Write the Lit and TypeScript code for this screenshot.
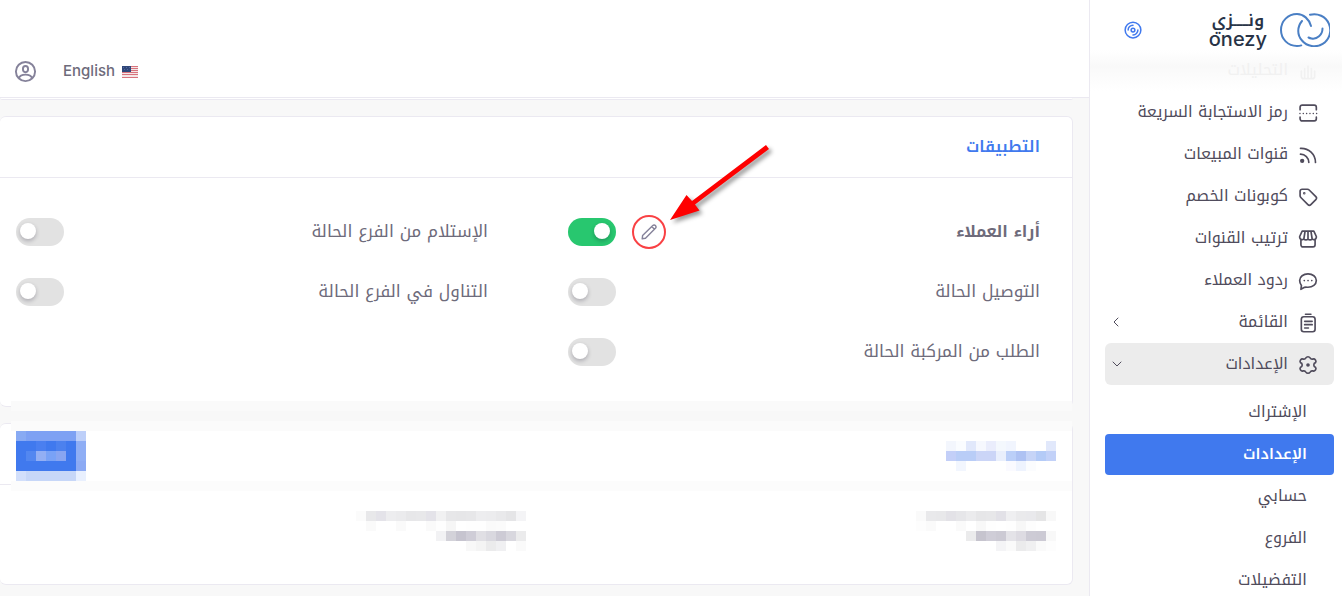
import { LitElement, html, css, svg, nothing } from "lit";
import { customElement, property } from "lit/decorators.js";

const CELL = 10;

const tidy = (rows: string[]) => rows.map((r) => r.trim().split(/\s+/));

const titleTiles = tidy([
  "f3f6fd fafcff e1e8fb f6f8fe eaedfc f4f8fd f1f5fe - - - e1e8fb",
  "c3cff8 b9cdf7 b9cdf7 cbd5f7 cbd5f7 e9effc bbcff8 aec2f3 c6d4f7 b4cbf7 c2d1f8",
  "- f2f6fe - - - - fafaff eef3fe fbfcfe - -",
]);

const buttonTiles = tidy([
  "88aaf3 7ea1f3 7ea1f3 7ea1f3 7ea1f3 7ea1f3 bdcff9",
  "4079ee 4079ee 4a7ff0 4079ee 4c81ee 4079ee 8faef5",
  "4079ee 5387f0 93aff4 79a2f6 88a5f1 4079ee 8faef5",
  "4079ee 4079ee 4079ee 4079ee 4079ee 4079ee 8caaf4",
  "d2dffb c7d7f8 c7d7f8 c7d7f8 c7d7f8 c7d7f8 e9f0fe",
]);

const firstTextTiles = tidy([
  "fafafa e9e9eb e8e8ea e3e2e7 e6e6e9 ebebed e6e6e8 e7e7e9 e2e1e7 efeff1 eaeaec e9e9ec e5e5e6 f8f8f8",
  "fdfdfd fafafa - - fafafa - f8f8f8 fefefe - fefefe f7f7f7 fdfdfd - -",
  "- - - - - ebebec c6c4ce cfcdd7 cccad4 e4e3e8 dddbe2 cdcbd5 cccad4 f8f8f8",
  "- - - - - - - - f4f4f6 fafafa ebebec f0f0f1 fafafa fdfdfd",
]);

const secondTextTiles = tidy([
  "fbfbfb e8e8ea e4e3e9 ededef ebebed e7e7e9 e8e8ea e4e3e9 f1f1f2 e7e7e9 e6e6e8 e7e7e9 ededef ececee e9e9eb e5e5e7 f4f4f6",
  "- fafafa - - fafafa - - fafafa fefefe f6f6f6 - fefefe fefefe fafafa fbfbfb - -",
  "- - - - - - - - f2f2f4 d3d2d9 c6c4cf cfcdd7 e0dfe4 d9d8df cdcbd5 d8d7de ebebec",
  "- - - - - - - - - - - f8f8f8 f4f4f4 ebebec f0f0f2 - fafafa",
]);

const icons = {
  chart: svg`<path d="M4 11v6a3 3 0 0 0 3 3h10a3 3 0 0 0 3-3v-6M8 8v12M12 5v15M16 8v12"/>`,
  scan: svg`<path d="M2.500 8V5a2.500 2.500 0 0 1 2.500-2.500h14.500a2.500 2.500 0 0 1 2.500 2.500v3M2.500 17v2a2.500 2.500 0 0 0 2.500 2.500h14.500a2.500 2.500 0 0 0 2.500-2.500v-2"/><path d="M2.300 12.500h20.500" stroke-width="1.700" stroke-dasharray=".1 3.900"/>`,
  rss: svg`<circle cx="5" cy="19" r="1.600" fill="currentColor"/><path d="M3 11a10 10 0 0 1 10 10M3 4a17 17 0 0 1 18 17"/>`,
  tag: svg`<path d="M2.500 5v5.500a3 3 0 0 0 .9 2.100l8.500 8.500a2.500 2.500 0 0 0 3.500 0l6-6a2.500 2.500 0 0 0 0-3.500l-8-8a3 3 0 0 0-2.100-.9H5A2.500 2.500 0 0 0 2.500 5z"/><circle cx="7.500" cy="7.500" r=".5" fill="currentColor"/>`,
  store: svg`<path d="M3.500 13v6a2.500 2.500 0 0 0 2.500 2.500h12a2.500 2.500 0 0 0 2.500-2.500v-6M5 2.500h14L22 9v1a3 3 0 0 1-5 2 3.400 3.400 0 0 1-5 0 3.400 3.400 0 0 1-5 0 3 3 0 0 1-5-2V9zM8.500 2.500L7 12M15.500 2.500L17 12M12 2.500V12"/>`,
  chat: svg`<path d="M12 3.500c5.500 0 10 3.300 10 8s-4.500 8-10 8c-1.500 0-3-.2-4.200.1L3.500 22l.6-4.500C3 16 2 14 2 11.500c0-4.700 4.500-8 10-8z"/><path d="M7.500 11.500h.1M12 11.500h.1M16.500 11.500h.1"/>`,
  list: svg`<rect x="4" y="4.500" width="16.500" height="18" rx="3"/><path d="M9 1.500h6.500M8 10h9M8 14h9M8 18h4.500"/>`,
  gear: svg`<path d="M9.500 3.500a2.900 2.900 0 0 1 5 0 2.900 2.900 0 0 0 3.300 1.400 2.900 2.900 0 0 1 3.300 4.300 2.900 2.900 0 0 0 0 5.600 2.900 2.900 0 0 1-3.300 4.300 2.900 2.900 0 0 0-3.300 1.400 2.900 2.900 0 0 1-5 0 2.900 2.900 0 0 0-3.300-1.400 2.900 2.900 0 0 1-3.300-4.300 2.900 2.900 0 0 0 0-5.600 2.900 2.900 0 0 1 3.300-4.300 2.900 2.900 0 0 0 3.300-1.400z"/><circle cx="12" cy="12" r="1.200" fill="currentColor"/>`,
};

type IconName = keyof typeof icons;

interface MenuItem {
  label: string;
  icon: IconName;
  arrow?: "closed" | "open";
}

const menu: MenuItem[] = [
  { label: "رمز الاستجابة السريعة", icon: "scan" },
  { label: "قنوات المبيعات", icon: "rss" },
  { label: "كوبونات الخصم", icon: "tag" },
  { label: "ترتيب القنوات", icon: "store" },
  { label: "ردود العملاء", icon: "chat" },
  { label: "القائمة", icon: "list", arrow: "closed" },
  { label: "الإعدادات", icon: "gear", arrow: "open" },
];

const submenu = ["الإشتراك", "الإعدادات", "حسابي", "الفروع", "التفضيلات"];

const apps = [
  { label: "أراء العملاء", on: true, editable: true },
  { label: "الإستلام من الفرع الحالة", on: false, editable: false },
  { label: "التوصيل الحالة", on: false, editable: false },
  { label: "التناول في الفرع الحالة", on: false, editable: false },
  { label: "الطلب من المركبة الحالة", on: false, editable: false },
];

@customElement("tile-block")
export class TileBlock extends LitElement {
  @property({ attribute: false }) tiles: string[][] = [];

  static styles = css`
    :host { display: block; flex: none; }
    svg { display: block; }
  `;

  render() {
    const w = this.tiles[0].length * CELL;
    const h = this.tiles.length * CELL;
    return html`<svg width=${w} height=${h} shape-rendering="crispEdges" aria-hidden="true">
      ${this.tiles.map((row, y) =>
        row.map((c, x) =>
          c === "-" ? nothing : svg`<rect x=${x * CELL} y=${y * CELL} width=${CELL} height=${CELL} fill="#${c}"/>`
        )
      )}
    </svg>`;
  }
}

@customElement("side-menu")
export class SideMenu extends LitElement {
  static styles = css`
    :host { display: block; background: #fff; border-inline-end: 1px solid #ebe9f1; color: #504c5c; overflow: hidden; }
    a { color: inherit; text-decoration: none; }
    .brand { display: flex; align-items: center; height: 58px; padding: 2px 12px 0; box-sizing: border-box; }
    .logo { display: flex; align-items: center; gap: 13px; color: #283347; }
    .mark { display: block; }
    .words { display: flex; flex-direction: column; align-items: center; }
    .word-ar { font-size: 17px; line-height: 18px; font-weight: 600; }
    .word-en { font: 500 20px/20px Inter, sans-serif; }
    .pin { margin-inline-start: auto; margin-inline-end: 22px; padding: 0; border: 0; background: none; color: #4079ee; display: flex; }
    .nav { padding-inline: 8px 15px; }
    .item { display: flex; align-items: center; gap: 10px; height: 42px; padding-block: 2px 0; padding-inline: 16px 6px; border-radius: 6px; font-size: 16px; box-sizing: border-box; }
    .label { flex: 1; padding-bottom: 4px; }
    .glyph { display: block; flex: none; fill: none; stroke: currentColor; stroke-width: 2; stroke-linecap: round; stroke-linejoin: round; }
    .chevron { stroke-width: 1; }
    .open { background: #ececec; }
    .faded { height: 41px; margin: -8px -8px 0 -15px; padding-inline: 24px 21px; border-radius: 0; color: #f1f1f1; background: linear-gradient(#fff, #f9f9f9 40%, #fff); }
    .sub { padding-top: 7px; }
    .child { display: flex; align-items: center; height: 41px; margin-bottom: 1px; padding: 0 27px 2px; border-radius: 4px; font-size: 16px; box-sizing: border-box; }
    .current { background: #4079ee; color: #fff; font-size: 15px; font-weight: 600; }
  `;

  private icon(name: IconName) {
    return html`<svg class="glyph" width="20" height="20" viewBox="0 0 24 24">${icons[name]}</svg>`;
  }

  render() {
    return html`
      <div class="brand">
        <a class="logo" href="#">
          <svg class="mark" width="50" height="34" viewBox="0 0 50 34" fill="none" stroke="#4a7fc4" stroke-width="2" stroke-linecap="round">
            <path d="M31 13C29 6 23.500 1 17 1 8 1 1 8 1 17s7 16 16 16c1.500 0 3-.2 4.300-.6"/>
            <path d="M22 8c-5 6-5 14 0 19.500A16 16 0 1 0 30 1.800"/>
            <path d="M42.500 15.500c0 6.500-5.500 11-11 10-1.200-.2-2.200-.6-3-1"/>
          </svg>
          <span class="words">
            <span class="word-ar">ونـــــزي</span>
            <span class="word-en">onezy</span>
          </span>
        </a>
        <button class="pin" aria-label="تثبيت القائمة">
          <svg width="18" height="18" viewBox="0 0 24 24" fill="none" stroke="currentColor" stroke-width="2" stroke-linecap="round">
            <circle cx="12" cy="12" r="10.500"/><circle cx="12" cy="12" r="2.500"/>
            <path d="M5.500 12A6.500 6.500 0 0 1 12 5.500M18.500 12a6.500 6.500 0 0 1-6.500 6.500"/>
          </svg>
        </button>
      </div>
      <nav class="nav">
        <a class="item faded" href="#">${this.icon("chart")}<span class="label">التحليلات</span></a>
        ${menu.map(
          (m) => html`<a class="item ${m.arrow === "open" ? "open" : ""}" href="#">
            ${this.icon(m.icon)}<span class="label">${m.label}</span>
            ${m.arrow
              ? html`<svg class="glyph chevron" width="12" height="12" viewBox="0 0 12 12">
                  <path d=${m.arrow === "open" ? "M2 3l4 4 4-4" : "M7 1L3 5l4 4"} />
                </svg>`
              : nothing}
          </a>`
        )}
        <div class="sub">
          ${submenu.map((s, i) => html`<a class="child ${i === 1 ? "current" : ""}" href="#">${s}</a>`)}
        </div>
      </nav>
    `;
  }
}

@customElement("app-root")
export class AppRoot extends LitElement {
  static styles = css`
    :host {
      display: grid; grid-template-columns: 253px minmax(0, 1fr); direction: rtl; height: 100vh; overflow: hidden;
      background: #f8f8f8; color: #6e6b7b; font-family: "Noto Kufi Arabic", "Noto Sans Arabic", "DejaVu Sans", sans-serif; font-size: 16px;
    }
    main { display: flex; flex-direction: column; overflow: hidden; }
    .top { display: flex; flex: none; flex-direction: row-reverse; align-items: flex-end; gap: 26px; height: 98px; padding: 0 14px 14px; box-sizing: border-box; background: #fff; border-bottom: 1px solid #ebe9f1; }
    .user { display: flex; padding: 0; border: 0; background: none; color: #85829a; }
    .lang { display: flex; align-items: center; gap: 7px; height: 24px; color: #6e6b7b; text-decoration: none; direction: ltr; font: 500 15px/24px Inter, sans-serif; }
    .flag { display: block; padding-top: 2px; }
    .previous { flex: none; height: 2px; margin-inline-start: 16px; box-sizing: border-box; background: #fff; border-bottom: 1px solid #ebe9f1; border-radius: 0 0 6px 6px; }
    .card { position: relative; flex: none; margin: 16px 16px 0 0; background: #fff; border: 1px solid #ebe9f1; border-left: 0; border-radius: 6px; }
    .card-head { display: flex; align-items: center; height: 61px; padding: 0 32px 2px; box-sizing: border-box; border-bottom: 1px solid #ebe9f1; }
    .title { margin: 0; color: #4079ee; font-size: 16px; font-weight: 600; }
    .apps { display: grid; grid-template-columns: 1fr 1fr; column-gap: 80px; padding: 24px 32px 24px 16px; }
    .app { display: flex; align-items: center; gap: 16px; height: 60px; }
    .name { flex: 1; padding-bottom: 2px; font-size: 17px; }
    .strong { font-size: 16px; font-weight: 700; }
    .switch { appearance: none; flex: none; width: 48px; height: 28px; margin: 0; padding: 5px 4px 7px; box-sizing: border-box; border-radius: 14px; background: #e2e2e2; direction: ltr; display: flex; }
    .switch::before { content: ""; width: 16px; height: 16px; border-radius: 50%; background: #fff; box-shadow: 0 2px 4px rgba(11, 7, 30, 0.25); }
    .switch:checked { background: #28c76f; justify-content: flex-end; padding-right: 6px; }
    .edit-spot { position: relative; flex: none; }
    .edit { display: flex; align-items: center; justify-content: center; width: 34px; height: 34px; padding: 0; border: 2px solid #f94144; border-radius: 50%; background: none; color: #85829a; }
    .pointer { position: absolute; left: 34px; bottom: 26px; pointer-events: none; filter: drop-shadow(3px 3px 2px rgba(0, 0, 0, 0.4)); }
    .masked-head { justify-content: space-between; align-items: flex-start; padding: 7px 16px 0; }
    .masked-title { padding-top: 10px; }
    .masked-button { position: relative; z-index: 2; padding: 0; border: 0; background: none; }
    .masked-body { display: grid; grid-template-columns: 1fr 1fr; column-gap: 20px; padding: 26px 16px 33px; }
    .masked-card::before, .masked-card::after { content: ""; position: absolute; left: 11px; right: 0; }
    .masked-card::before { top: -23px; height: 30px; background: linear-gradient(#fafafa 10px, #f8f8f8 10px 20px, #fbfbfb 20px); }
    .masked-card::after { top: 57px; height: 10px; background: #fcfcfc; }
  `;

  render() {
    return html`
      <side-menu></side-menu>
      <main>
        <header class="top">
          <button class="user" aria-label="الحساب">
            <svg width="23" height="23" viewBox="0 0 24 24" fill="none" stroke="currentColor" stroke-width="2">
              <circle cx="12" cy="12" r="10"/><ellipse cx="12" cy="9.500" rx="2.700" ry="3.300"/><path d="M5 19c2-5 12-5 14 0"/>
            </svg>
          </button>
          <a class="lang" href="#">English
            <svg class="flag" width="16" height="12" viewBox="0 0 16 12" shape-rendering="crispEdges" aria-hidden="true">
              <path fill="#f5e6e6" d="M0 0h16v12H0z"/>
              <path fill="#d8737d" d="M0 0h16v1H0zM0 2h16v1H0zM0 4h16v1H0zM0 6h16v1H0zM0 8h16v1H0zM0 11h16v1H0z"/>
              <path fill="#2f4779" d="M0 0h9v6H0z"/>
              <path fill="#5568a0" d="M1 1h1v1H1zM4 1h1v1H4zM7 1h1v1H7zM2 3h1v1H2zM5 3h1v1H5z"/>
            </svg>
          </a>
        </header>
        <div class="previous"></div>
        <section class="card">
          <div class="card-head"><h2 class="title">التطبيقات</h2></div>
          <div class="apps">
            ${apps.map(
              (a, i) => html`<div class="app">
                <label class="name ${a.editable ? "strong" : ""}" for="app-${i}">${a.label}</label>
                ${a.editable
                  ? html`<span class="edit-spot">
                      <button class="edit" aria-label="تعديل">
                        <svg width="16" height="16" viewBox="0 0 16 16" fill="none" stroke="currentColor" stroke-width="1.400" stroke-linejoin="round">
                          <path d="M1.200 14.800l.4-3.300L11.800 1.600a1.800 1.800 0 0 1 2.600 2.600L4.500 14.300zM11 2.800l2.200 2.200"/>
                        </svg>
                      </button>
                      <svg class="pointer" width="106" height="82" viewBox="0 0 106 82" aria-hidden="true">
                        <path fill="#fe0000" d="M4 79L20.500 54l5.500 6L100 4l3 4L29 63.500l4.500 6z"/>
                      </svg>
                    </span>`
                  : nothing}
                <input class="switch" type="checkbox" id="app-${i}" .checked=${a.on} />
              </div>`
            )}
          </div>
        </section>
        <section class="card masked-card">
          <div class="card-head masked-head">
            <tile-block class="masked-title" .tiles=${titleTiles}></tile-block>
            <button class="masked-button" aria-label="حفظ"><tile-block .tiles=${buttonTiles}></tile-block></button>
          </div>
          <div class="masked-body">
            <tile-block .tiles=${firstTextTiles}></tile-block>
            <tile-block .tiles=${secondTextTiles}></tile-block>
          </div>
        </section>
      </main>
    `;
  }
}
